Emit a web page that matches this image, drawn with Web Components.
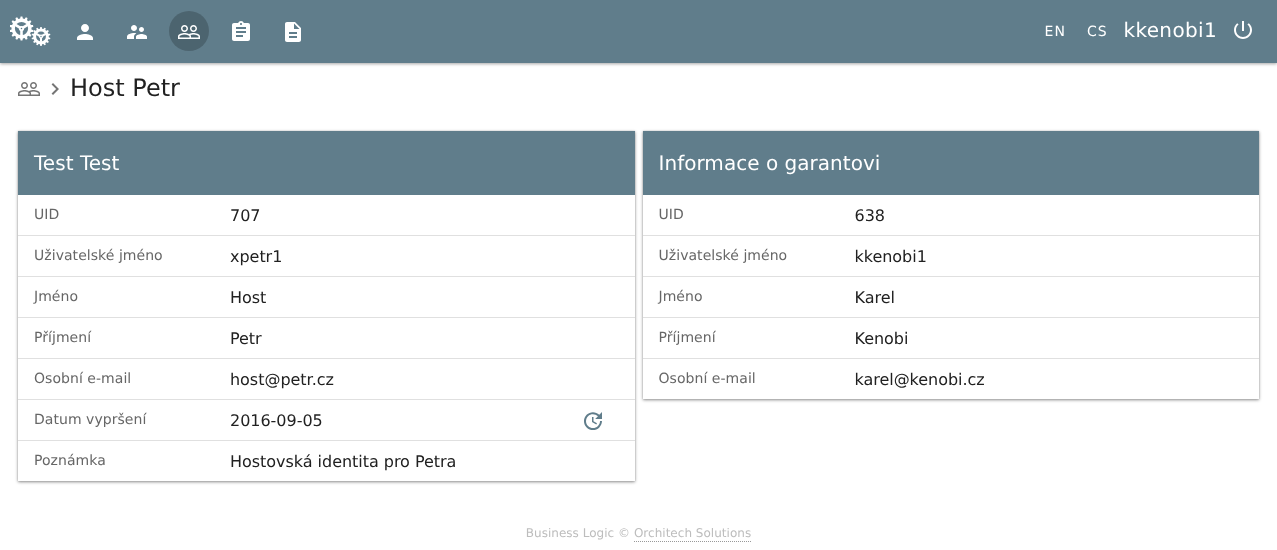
<!DOCTYPE html>
<html lang="cs"><head><meta charset="utf-8"><title>Host Petr</title>
<style>
html,body{margin:0;padding:0;background:#fff;font-family:"DejaVu Sans",sans-serif;color:#212121;text-rendering:geometricPrecision}
</style></head><body>
<app-shell>
  <app-header user="kkenobi1"></app-header>
  <page-title>Host Petr</page-title>
  <card-grid>
    <info-card heading="Test Test">
      <info-row label="UID">707</info-row>
      <info-row label="Uživatelské jméno">xpetr1</info-row>
      <info-row label="Jméno">Host</info-row>
      <info-row label="Příjmení">Petr</info-row>
      <info-row label="Osobní e-mail">host@petr.cz</info-row>
      <info-row label="Datum vypršení">2016-09-05<md-icon slot="action" name="update" style="color:#607d8b"></md-icon></info-row>
      <info-row label="Poznámka">Hostovská identita pro Petra</info-row>
    </info-card>
    <info-card heading="Informace o garantovi">
      <info-row label="UID">638</info-row>
      <info-row label="Uživatelské jméno">kkenobi1</info-row>
      <info-row label="Jméno">Karel</info-row>
      <info-row label="Příjmení">Kenobi</info-row>
      <info-row label="Osobní e-mail">karel@kenobi.cz</info-row>
    </info-card>
  </card-grid>
  <app-footer></app-footer>
</app-shell>
<script>
const ICONS={
person:'M12 12c2.21 0 4-1.79 4-4s-1.79-4-4-4-4 1.79-4 4 1.79 4 4 4zm0 2c-2.67 0-8 1.34-8 4v2h16v-2c0-2.66-5.33-4-8-4z',
supervisor:'M16.5 12c1.38 0 2.49-1.12 2.49-2.5S17.88 7 16.5 7C15.12 7 14 8.12 14 9.5s1.12 2.5 2.5 2.5zM9 11c1.66 0 2.99-1.34 2.99-3S10.66 5 9 5C7.34 5 6 6.34 6 8s1.34 3 3 3zm7.5 3c-1.83 0-5.5.92-5.5 2.75V19h11v-2.25c0-1.83-3.67-2.75-5.5-2.75zM9 13c-2.33 0-7 1.17-7 3.5V19h7v-2.25c0-.85.33-2.34 2.37-3.47C10.5 13.1 9.66 13 9 13z',
people:'M16.5 13c-1.2 0-3.07.34-4.5 1-1.43-.67-3.3-1-4.5-1C5.33 13 1 14.08 1 16.25V19h22v-2.75c0-2.17-4.33-3.25-6.5-3.25zm-4 4.5h-10v-1.25c0-.54 2.56-1.75 5-1.75s5 1.21 5 1.75v1.25zm9 0H14v-1.25c0-.46-.2-.86-.52-1.22.88-.3 1.96-.53 3.02-.53 2.44 0 5 1.21 5 1.75v1.25zM7.5 12c1.93 0 3.5-1.57 3.5-3.5S9.43 5 7.5 5 4 6.57 4 8.5 5.57 12 7.5 12zm0-5.5c1.1 0 2 .9 2 2s-.9 2-2 2-2-.9-2-2 .9-2 2-2zm9 5.5c1.93 0 3.5-1.57 3.5-3.5S18.43 5 16.5 5 13 6.57 13 8.5s1.57 3.5 3.5 3.5zm0-5.5c1.1 0 2 .9 2 2s-.9 2-2 2-2-.9-2-2 .9-2 2-2z',
assignment:'M19 3h-4.18C14.4 1.84 13.3 1 12 1c-1.3 0-2.4.84-2.82 2H5c-1.1 0-2 .9-2 2v14c0 1.1.9 2 2 2h14c1.1 0 2-.9 2-2V5c0-1.1-.9-2-2-2zm-7 0c.55 0 1 .45 1 1s-.45 1-1 1-1-.45-1-1 .45-1 1-1zm2 14H7v-2h7v2zm3-4H7v-2h10v2zm0-4H7V7h10v2z',
description:'M14 2H6c-1.1 0-1.99.9-1.99 2L4 20c0 1.1.89 2 1.99 2H18c1.1 0 2-.9 2-2V8l-6-6zm2 16H8v-2h8v2zm0-4H8v-2h8v2zm-3-5V3.5L18.5 9H13z',
power:'M13 3h-2v10h2V3zm4.83 2.17l-1.42 1.42C17.99 7.86 19 9.81 19 12c0 3.87-3.13 7-7 7s-7-3.13-7-7c0-2.19 1.01-4.14 2.58-5.42L6.17 5.17C4.23 6.82 3 9.26 3 12c0 4.97 4.03 9 9 9s9-4.03 9-9c0-2.74-1.23-5.18-3.17-6.83z',
chevron:'M10 6L8.59 7.41 13.17 12l-4.58 4.59L10 18l6-6z',
update:'M21 10.12h-6.78l2.74-2.82c-2.73-2.7-7.15-2.8-9.88-.1-2.73 2.71-2.73 7.08 0 9.79s7.15 2.71 9.88 0C18.32 15.65 19 14.08 19 12.1h2c0 1.98-.88 4.55-2.64 6.29-3.51 3.48-9.21 3.48-12.72 0-3.5-3.47-3.53-9.11-.02-12.58s9.14-3.47 12.65 0L21 3v7.12zM12.5 8v4.25l3.5 2.08-.72 1.21L11 13V8h1.5z'
};
function def(name,css,html,init){
  customElements.define(name,class extends HTMLElement{
    connectedCallback(){
      if(this.shadowRoot)return;
      const r=this.attachShadow({mode:'open'});
      r.innerHTML='<style>'+css+'</style>'+(typeof html==='function'?html(this):html);
      if(init)init(this,r);
    }
  });
}
function gearPath(cx,cy,n,ro,rr,rh,rhub,sw){
  let d='';
  const pt=(r,a)=>(cx+r*Math.cos(a)).toFixed(2)+' '+(cy+r*Math.sin(a)).toFixed(2);
  const st=2*Math.PI/n;
  for(let i=0;i<n;i++){
    const a=i*st-Math.PI/2;
    d+=(i?'L':'M')+pt(rr,a-st*.30)+'L'+pt(ro,a-st*.17)+'L'+pt(ro,a+st*.17)+'L'+pt(rr,a+st*.30)+'L'+pt(rr,a+st*.70);
  }
  d+='Z';
  d+='M'+pt(rh,0)+'A'+rh+' '+rh+' 0 1 0 '+pt(rh,Math.PI)+'A'+rh+' '+rh+' 0 1 0 '+pt(rh,0)+'Z';
  let spokes='';
  [90,210,330].forEach(deg=>{
    const a=deg*Math.PI/180;
    spokes+=`<line x1="${cx}" y1="${cy}" x2="${(cx+(rh+.5)*Math.cos(a)).toFixed(2)}" y2="${(cy+(rh+.5)*Math.sin(a)).toFixed(2)}"/>`;
  });
  return `<path d="${d}" fill="#fff" fill-rule="evenodd"/><g stroke="#fff" stroke-width="${sw}">${spokes}</g><circle cx="${cx}" cy="${cy}" r="${rhub}" fill="#fff"/><circle cx="${cx}" cy="${cy}" r="${rhub*.3}" fill="#607d8b"/>`;
}
def('md-icon',':host{display:inline-flex;width:24px;height:24px;color:inherit}svg{width:100%;height:100%;fill:currentColor;display:block}',
  el=>`<svg viewBox="0 0 24 24" aria-hidden="true"><path d="${ICONS[el.getAttribute('name')]}"/></svg>`);
def('gear-logo',':host{display:block;width:42px;height:32px}svg{display:block}',
  ()=>`<svg width="42" height="32" viewBox="0 0 42 32" aria-hidden="true">${gearPath(11.5,13.5,14,12,10,6.6,2.6,2.6)}${gearPath(31,21.5,14,9.5,7.8,4.9,2.1,2.1)}</svg>`);
def('nav-button',`:host{display:flex;width:40px;height:40px;border-radius:50%;align-items:center;justify-content:center;color:#fff}
  :host([active]){background:rgba(0,0,0,.2)}
  md-icon{margin-top:2px}`,
  el=>`<md-icon name="${el.getAttribute('icon')}"></md-icon>`);
def('app-header',`:host{display:flex;align-items:center;height:63px;background:#607d8b;color:#fff;box-shadow:0 1px 3px rgba(0,0,0,.35);position:relative;padding:0 22px 1px 10px;box-sizing:border-box}
  .nav{display:flex;gap:12px;margin-left:13px}
  .right{margin-left:auto;display:flex;align-items:center}
  .lang{font-size:14px;letter-spacing:1px;margin-top:2px}
  .en{margin-right:21px}
  .user{font-size:20px;letter-spacing:.35px;margin-left:16px;margin-top:-3px}
  md-icon{margin-left:14px;margin-top:-3px}`,
  el=>`<gear-logo class="logo"></gear-logo>
  <div class="nav"><nav-button icon="person"></nav-button><nav-button icon="supervisor"></nav-button><nav-button icon="people" active></nav-button><nav-button icon="assignment"></nav-button><nav-button icon="description"></nav-button></div>
  <div class="right"><span class="lang en">EN</span><span class="lang">CS</span><span class="user">${el.getAttribute('user')}</span><md-icon name="power"></md-icon></div>`);
def('page-title',`:host{display:flex;align-items:center;height:50px;padding:1px 17px 0;color:#212121}
  .crumb{color:#757575;display:flex;align-items:center}
  .crumb md-icon:last-child{margin-left:2px}
  .h{font-size:24px;margin-left:3px;line-height:50px;margin-top:-2px}`,
  `<span class="crumb"><md-icon name="people"></md-icon><md-icon name="chevron"></md-icon></span><span class="h"><slot></slot></span>`);
def('card-grid',`:host{display:grid;grid-template-columns:1fr 1fr;gap:8px;padding:17px 18px 0;align-items:start}`,`<slot></slot>`);
def('info-card',`:host{display:block;background:#fff;box-shadow:0 1px 3px rgba(0,0,0,.45),0 0 1px rgba(0,0,0,.2)}
  header{height:64px;background:#607d8b;color:#fff;font-size:20px;display:flex;align-items:center;padding:0 16px;letter-spacing:.03px}`,
  el=>`<header>${el.getAttribute('heading')}</header><slot></slot>`);
def('info-row',`:host{display:flex;align-items:center;height:40px;border-top:1px solid #e0e0e0;padding:0 16px;position:relative;font-size:16px;color:#212121}
  :host(:first-child){border-top:0}
  .l{width:196px;flex:none;font-size:14px;color:#666;padding-bottom:1px;letter-spacing:.05px}
  .v{flex:1;letter-spacing:-.03px}
  .a{position:absolute;right:30px;top:9px;display:flex}`,
  el=>`<span class="l">${el.getAttribute('label')}</span><span class="v"><slot></slot></span><span class="a"><slot name="action"></slot></span>`);
def('app-footer',`:host{display:block;text-align:center;font-size:12px;color:#bdbdbd;padding-top:45px;letter-spacing:.02px}
  a{display:inline-block;line-height:15px;color:inherit;text-decoration:none;border-bottom:1px dotted #999}`,
  `Business Logic © <a href="#">Orchitech Solutions</a>`);
def('app-shell',`:host{display:block;will-change:transform}`,`<slot></slot>`);
</script>
</body></html>
